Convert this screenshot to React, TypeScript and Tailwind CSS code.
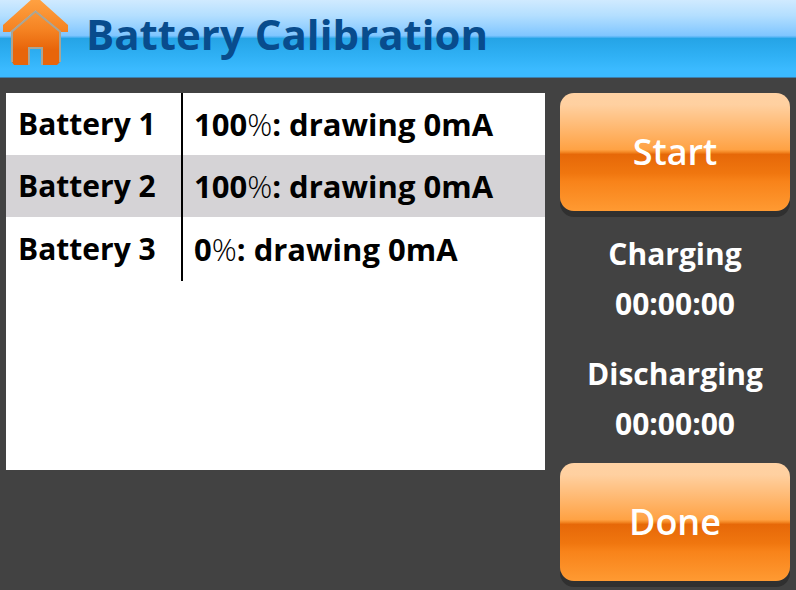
type Battery = {
  name: string;
  charge: number;
  draw: number;
};

const batteries: Battery[] = [
  { name: "Battery 1", charge: 100, draw: 0 },
  { name: "Battery 2", charge: 100, draw: 0 },
  { name: "Battery 3", charge: 0, draw: 0 },
];

function HomeIcon() {
  return (
    <svg
      xmlns="http://www.w3.org/2000/svg"
      viewBox="0 0 68 68"
      className="block h-[68px] w-[68px]"
      aria-hidden="true"
    >
      <defs>
        <linearGradient id="home" x1="0" y1="0" x2="0" y2="66" gradientUnits="userSpaceOnUse">
          <stop offset="0" stopColor="#ffa142" />
          <stop offset="0.45" stopColor="#f58322" />
          <stop offset="0.75" stopColor="#e8650a" />
          <stop offset="1" stopColor="#e8650a" />
        </linearGradient>
      </defs>
      <path
        d="M12 31 35.500 11 60 31V62L57 65H42V48H29V65H14L12 62Z"
        fill="url(#home)"
      />
      <path
        d="M32 -1H39L68 25V32H61L35.500 10.500 10 32H3V25Z"
        fill="url(#home)"
      />
      {/* grey seams: under the roof, down the walls and beside the door */}
      <path
        d="M12 62V31.500L35.500 11.500 60 31.500V62M29 65V48H42V65"
        fill="none"
        stroke="#a9a596"
        strokeWidth="2"
      />
    </svg>
  );
}

function GlossyButton({ label }: { label: string }) {
  return (
    <button
      type="button"
      className="h-[118px] w-full rounded-[14px] bg-[linear-gradient(to_bottom,#ffd2a4_0%,#ffd0a0_10%,#ffa244_48%,#f58a26_50%,#e66808_52%,#f0760f_68%,#f8831a_75%,#ff9a32_100%)] text-[36px] leading-none font-semibold text-white shadow-[0_6px_0_#303030]"
    >
      {label}
    </button>
  );
}

function Timer({ label, time }: { label: string; time: string }) {
  return (
    <div className="text-center text-[30px] leading-[50px] font-bold text-white">
      <div>{label}</div>
      <div>{time}</div>
    </div>
  );
}

export default function App() {
  return (
    <div className="min-h-screen bg-[#424242] font-['Open_Sans',sans-serif]">
      <header className="flex h-[78px] items-start gap-[18px] border-b border-[#3b7fae] bg-[linear-gradient(to_bottom,#d0eaff_0%,#b4dfff_20%,#80c6ff_46%,#5ab6f6_48%,#25a4e6_50%,#2fb0f4_72%,#3bbaff_90%,#3bbaff_100%)]">
        <a href="#" aria-label="Home">
          <HomeIcon />
        </a>
        <h1 className="text-[42px] leading-[68px] font-bold whitespace-nowrap text-[#084c8d]">
          Battery Calibration
        </h1>
      </header>

      <main className="flex gap-[15px] px-[6px] pt-[15px] pb-2">
        <section className="min-h-[377px] flex-1 self-start bg-white">
          <table className="w-full border-collapse text-left leading-none text-black">
            <tbody>
              {batteries.map((battery) => (
                <tr key={battery.name} className="h-[62px] last:h-[64px] even:bg-[#d5d3d6]">
                  <th
                    scope="row"
                    className="w-[176px] border-r-2 border-black pl-[12px] text-[30px] font-bold whitespace-nowrap"
                  >
                    {battery.name}
                  </th>
                  <td className="pl-[11px] text-[31px] font-bold whitespace-nowrap">
                    {battery.charge}
                    <span className="font-light">%</span>: drawing {battery.draw}mA
                  </td>
                </tr>
              ))}
            </tbody>
          </table>
        </section>

        <aside className="flex w-[230px] shrink-0 flex-col">
          <GlossyButton label="Start" />
          <div className="mt-[18px] mb-[14px] flex flex-col gap-5">
            <Timer label="Charging" time="00:00:00" />
            <Timer label="Discharging" time="00:00:00" />
          </div>
          <GlossyButton label="Done" />
        </aside>
      </main>
    </div>
  );
}
